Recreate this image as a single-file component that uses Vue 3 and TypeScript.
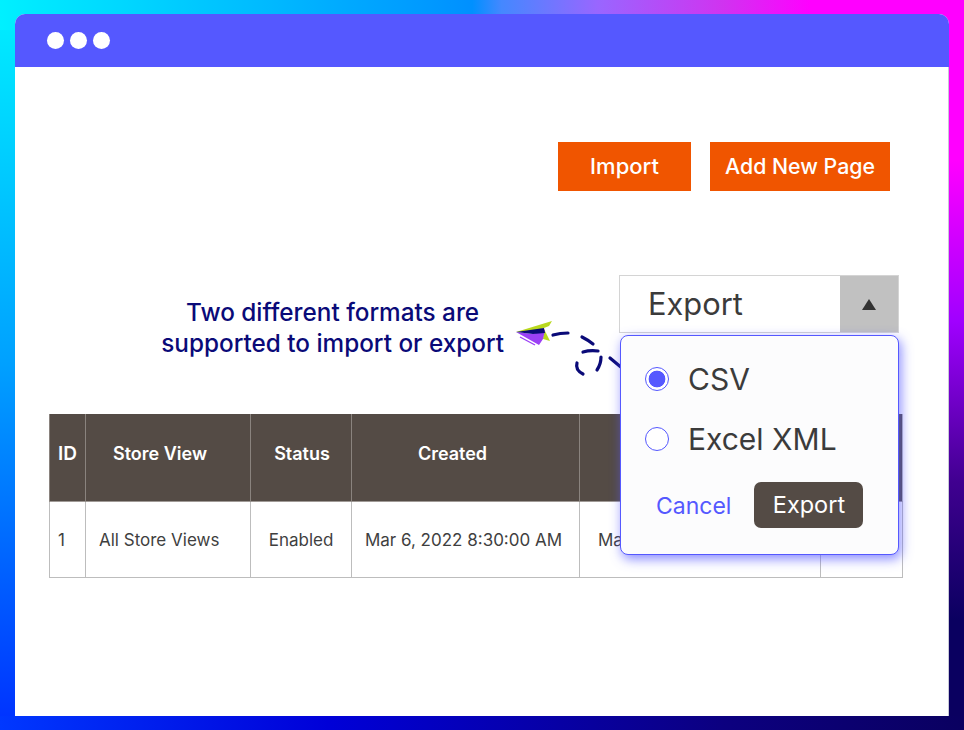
<script setup lang="ts">
const columns = [
  { label: 'ID', cls: 'c-id', value: '1' },
  { label: 'Store View', cls: 'c-store', value: 'All Store Views' },
  { label: 'Status', cls: 'c-status', value: 'Enabled' },
  { label: 'Created', cls: 'c-created', value: 'Mar 6, 2022 8:30:00 AM' },
  { label: '', cls: 'c-mod', value: 'Mar 6, 2022 8:30:00 AM' },
  { label: '', cls: 'c-act', value: '' },
]
</script>

<template>
  <div class="page">
    <div class="window">
      <header class="titlebar">
        <span class="dot"></span><span class="dot"></span><span class="dot"></span>
      </header>
      <main class="content">
        <div class="actions">
          <button class="orange import">Import</button>
          <button class="orange add">Add New Page</button>
        </div>
        <div class="export-row">
          <p class="note">Two different formats are<br />supported to import or export</p>
          <div class="select">
            <span class="select-label">Export</span>
            <span class="select-arrow"><i class="tri"></i></span>
          </div>
        </div>
        <div class="grid">
          <div v-for="c in columns" :key="c.cls" class="col" :class="c.cls">
            <div class="th">{{ c.label }}</div>
            <div class="td">{{ c.value }}</div>
          </div>
        </div>

        <svg class="arrow" width="140" height="90" viewBox="500 300 140 90" fill="none">
          <path d="M516 332 L552 321 L549 326 L544 328 L533 332 Z" fill="#b9d81e" />
          <path d="M544 329 L550 341 L543 339 Z" fill="#b9d81e" />
          <path d="M516 332 L533 334 L545 330 L543 339 L539 345 Z" fill="#9b40f5" />
          <path d="M520 337 L535 345" stroke="#9b40f5" stroke-width="1.2" />
          <path d="M516 332 L544 328 L545 333 L533 334 Z" fill="#0a0a78" />
          <g stroke="#0a0a78" stroke-width="3.2" stroke-linecap="round">
            <path d="M553 335 Q560 333 568 333" />
            <path d="M582 337 Q588 340 593 344" />
            <path d="M583 352 Q590 350 598 351" />
            <path d="M601 357 Q601 364 597 370" />
            <path d="M577 363 Q575 370 583 374" />
            <path d="M610 358 L622 368" />
          </g>
        </svg>

        <div class="popup">
          <label class="option"><span class="radio on"></span><span>CSV</span></label>
          <label class="option"><span class="radio"></span><span>Excel XML</span></label>
          <div class="popup-actions">
            <span class="cancel">Cancel</span>
            <button class="export-btn">Export</button>
          </div>
        </div>
      </main>
    </div>
  </div>
</template>

<style>
html, body { margin: 0; padding: 0; }
</style>

<style scoped>
.page {
  width: 964px;
  height: 730px;
  box-sizing: border-box;
  padding: 14px 15px;
  overflow: hidden;
  font-family: Inter, Lato, sans-serif;
  background:
    linear-gradient(90deg, #00f0ff 0, #0090ff 49%, #4488ff 52%, #9966ff 62%, #d033f0 75%, #ff00ff 84%) top / 100% 30px no-repeat,
    linear-gradient(90deg, #0038ff 0, #0000d8 34%, #0c0080 75%, #0a0060 100%) bottom / 100% 14px no-repeat,
    linear-gradient(180deg, #00f0ff 0, #00a0ff 50%, #0030ff 100%) left / 15px 100% no-repeat,
    linear-gradient(180deg, #ff00ff 0, #ff00ff 22%, #a000ff 44%, #400090 66%, #0a0060 85%, #0a0060 100%) right / 15px 100% no-repeat,
    #0060ff;
}
.window {
  height: 702px;
  background: #fff;
  border-radius: 10px 10px 0 0;
  overflow: hidden;
  display: flex;
  flex-direction: column;
}
.titlebar {
  height: 53px;
  background: #5558ff;
  display: flex;
  align-items: center;
  gap: 6px;
  padding-left: 32px;
}
.dot { width: 17px; height: 17px; border-radius: 50%; background: #fff; }
.content {
  position: relative;
  flex: 1;
  box-shadow: inset -1px 0 #c8c8d8;
}
.actions {
  display: flex;
  justify-content: flex-end;
  gap: 19px;
  padding: 75px 59px 0 0;
}
.orange {
  height: 49px;
  border: 0;
  background: #f05500;
  color: #fff;
  font: 500 22px Inter, sans-serif;
  padding: 0 0 2px;
}
.import { width: 133px; }
.add { width: 180px; font-size: 21.3px; }
.export-row {
  display: flex;
  justify-content: flex-end;
  padding: 84px 50px 0 0;
  gap: 115px;
}
.note {
  margin: 22px 0 0;
  color: #0a0a78;
  font-size: 24.3px;
  font-weight: 500;
  line-height: 31px;
  text-align: center;
  white-space: nowrap;
}
.select {
  width: 280px;
  height: 58px;
  box-sizing: border-box;
  border: 1px solid #d4d4d4;
  display: flex;
}
.select-label {
  flex: 1;
  padding-left: 28px;
  font-size: 30.8px;
  line-height: 56px;
  color: #3b3b3b;
}
.select-arrow {
  width: 58px;
  background: #c1c1c1;
  display: flex;
  align-items: center;
  justify-content: center;
}
.tri {
  width: 0; height: 0;
  border-left: 7px solid transparent;
  border-right: 7px solid transparent;
  border-bottom: 11px solid #333;
}
.grid {
  display: flex;
  margin: 55px 46px 0 34px;
}
.col { box-sizing: border-box; }
.th {
  height: 88px;
  box-sizing: border-box;
  background: #544b45;
  border-left: 1px solid #8a837e;
  border-bottom: 1px solid #a09a96;
  color: #fff;
  font-size: 18px;
  font-weight: 600;
  padding-bottom: 8px;
  display: flex;
  align-items: center;
  justify-content: center;
}
.td {
  height: 76px;
  box-sizing: border-box;
  border-left: 1px solid #bdbdbd;
  border-bottom: 1px solid #bdbdbd;
  color: #3f3f3f;
  font-size: 17px;
  display: flex;
  align-items: center;
  white-space: nowrap;
  overflow: hidden;
}
.c-id { width: 36px; }
.c-id .th, .c-id .td { justify-content: flex-start; padding-left: 8px; }
.c-id .th { font-size: 19px; }
.c-store { width: 165px; }
.c-store .th { padding-right: 16px; }
.c-store .td { padding-left: 13px; }
.c-status { width: 101px; }
.c-status .th { padding-left: 2px; }
.c-status .td { justify-content: center; }
.c-created { width: 228px; }
.c-created .th { padding-right: 26px; }
.c-created .td { justify-content: center; padding-right: 4px; }
.c-mod { width: 241px; }
.c-mod .td { padding-left: 18px; }
.c-act { width: 83px; }
.c-act .th, .c-act .td { border-right: 1px solid #bdbdbd; }
.arrow { position: absolute; left: 485px; top: 233px; overflow: visible; }
.popup {
  position: absolute;
  left: 605px;
  top: 268px;
  width: 279px;
  height: 220px;
  box-sizing: border-box;
  background: #fcfcfd;
  border: 1px solid #5558ff;
  border-radius: 8px;
  box-shadow: 2px 4px 12px rgba(85, 88, 255, 0.7);
  padding: 13px 24px;
}
.option {
  display: flex;
  align-items: center;
  gap: 19px;
  height: 60px;
  font-size: 30px;
  color: #3b3b3b;
}
.radio {
  box-sizing: border-box;
  width: 24px;
  height: 24px;
  border: 1px solid #5558ff;
  border-radius: 50%;
  background: #fff;
}
.radio.on { background: radial-gradient(circle, #5558ff 0 8px, #fff 8.7px); }
.popup-actions {
  display: flex;
  align-items: center;
  margin-top: 13px;
  padding-left: 11px;
  gap: 23px;
}
.cancel { color: #5558ff; font-size: 23px; padding-top: 1px; }
.export-btn {
  width: 109px;
  height: 46px;
  border: 0;
  border-radius: 7px;
  background: #544b45;
  color: #fff;
  font: 400 23.5px Inter, sans-serif;
  padding: 0 0 1px;
}
</style>
